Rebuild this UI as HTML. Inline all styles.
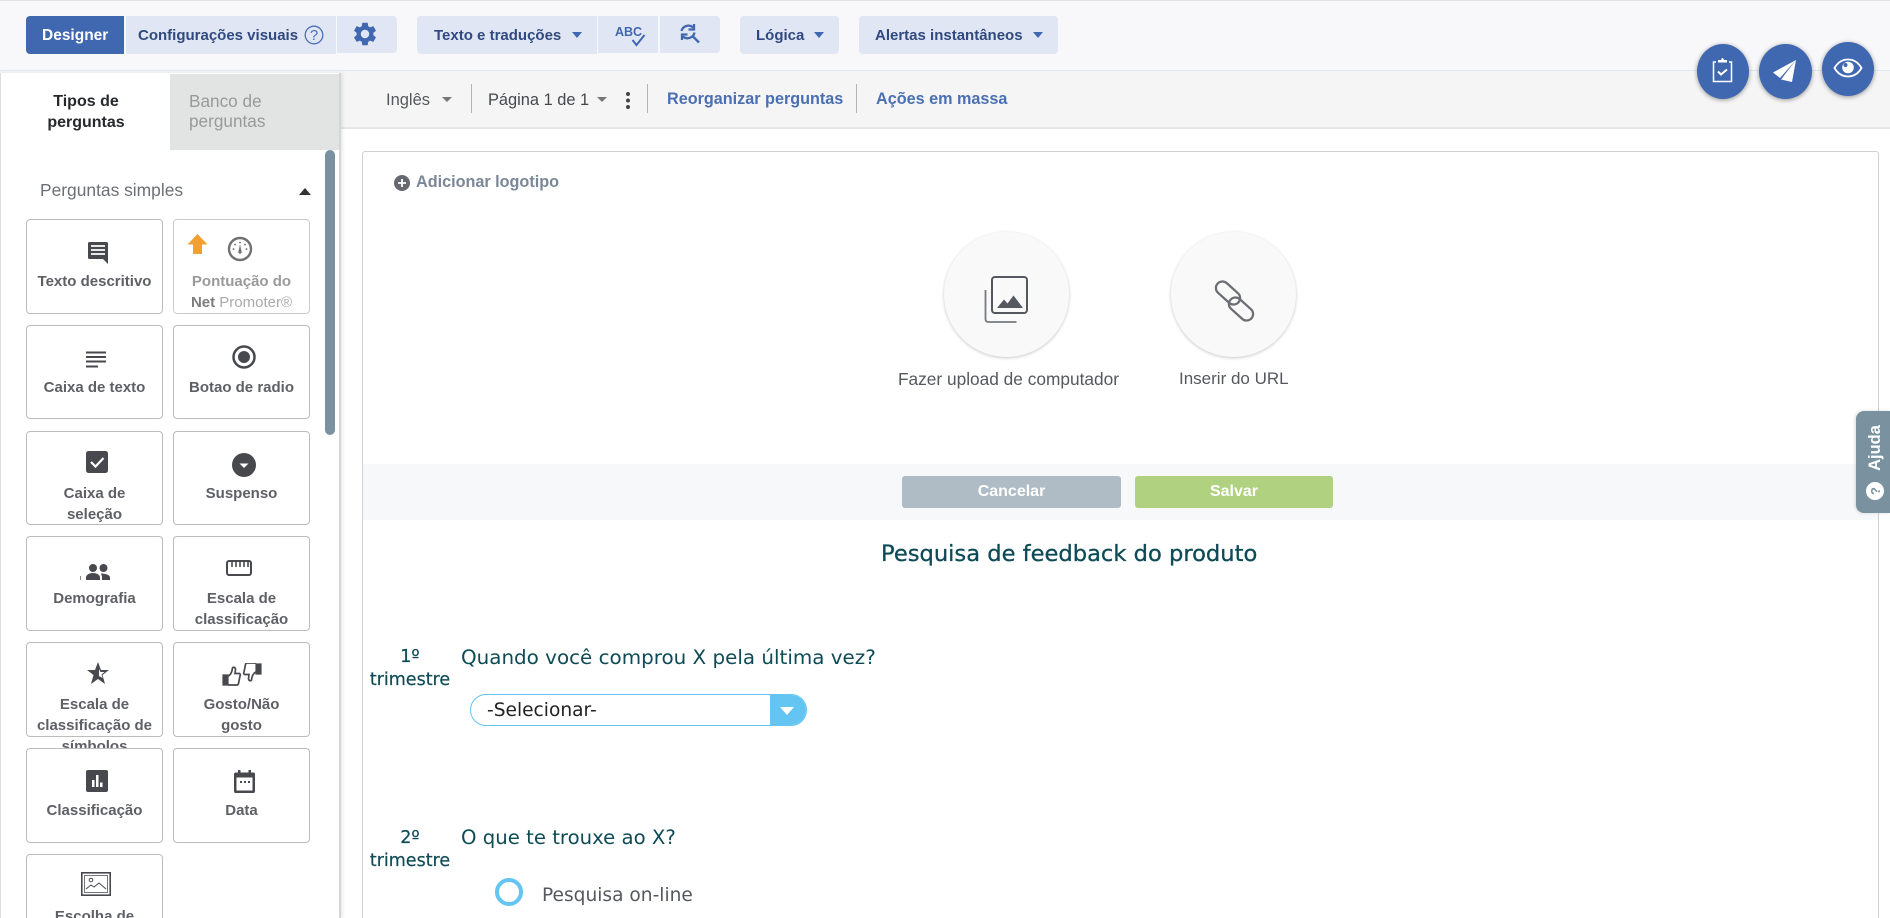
<!DOCTYPE html>
<html lang="pt"><head><meta charset="utf-8"><title>Designer</title>
<style>
html,body{margin:0;padding:0;width:1890px;height:918px;overflow:hidden;background:#fff;font-family:"Liberation Sans",sans-serif}
div,span,svg{position:absolute;box-sizing:border-box}
#r{left:0;top:0;width:1890px;height:918px;overflow:hidden;background:#fff}
.t{white-space:nowrap;line-height:20px}
.b{background:#e1e6f4}
.tb{color:#30497f;font-size:15px;font-weight:bold;top:26px}
.c{width:137px;background:#fff;border:1px solid #bcbcbc;border-radius:4px}
.l{left:-1px;width:137px;text-align:center;color:#5f6066;font-size:15px;font-weight:bold;line-height:21px;top:51px}
.m{font-family:"DejaVu Sans",sans-serif;color:#0f4b56;white-space:nowrap}
.car{width:0;height:0;border-left:5.5px solid transparent;border-right:5.5px solid transparent;border-top:6px solid #4068b0}
.gc{width:0;height:0;border-left:5px solid transparent;border-right:5px solid transparent;border-top:5px solid #777}
.sep{width:1px;background:#b5b5b5;top:84px;height:29px}
.fab{background:#4068b0;border-radius:50%;box-shadow:0 1px 5px rgba(0,0,0,.4)}
</style></head><body><div id="r">
<div style="left:0;top:0;width:1890px;height:1px;background:#e2e2e2"></div>
<div style="left:0;top:1px;width:1890px;height:69px;background:#f8f8fb"></div>
<div style="left:0;top:70px;width:1890px;height:59px;background:#f5f5f5;border-top:1px solid #e1e6f4;border-bottom:2px solid #e6e6e6"></div>

<div style="left:26px;top:16px;width:98px;height:38px;background:#4068b0;border-radius:4px 0 0 4px"></div>
<div class="t" style="left:42px;top:26px;color:#fff;font-size:15.5px;font-weight:bold">Designer</div>
<div class="b" style="left:126px;top:16px;width:210px;height:38px"></div>
<div class="t tb" style="left:138px">Configurações visuais</div>
<svg style="left:304px;top:25px" width="20" height="20" viewBox="0 0 20 20"><circle cx="10" cy="10" r="8.800" fill="none" stroke="#4a70b6" stroke-width="1.300"/><text x="10" y="15" text-anchor="middle" font-family="Liberation Sans" font-size="15" fill="#4a70b6">?</text></svg>
<div class="b" style="left:337px;top:16px;width:60px;height:37px;border-radius:0 4px 4px 0"></div>
<svg style="left:351px;top:20px" width="28" height="28" viewBox="0 0 24 24"><path fill="#4068b0" d="M19.14 12.94c.04-.3.06-.61.06-.94 0-.32-.02-.64-.07-.94l2.03-1.58c.18-.14.23-.41.12-.61l-1.92-3.32c-.12-.22-.37-.29-.59-.22l-2.39.96c-.5-.38-1.03-.7-1.62-.94l-.36-2.54c-.04-.24-.24-.41-.48-.41h-3.84c-.24 0-.43.17-.47.41l-.36 2.54c-.59.24-1.13.57-1.62.94l-2.39-.96c-.22-.08-.47 0-.59.22L2.74 8.87c-.12.21-.08.47.12.61l2.03 1.58c-.05.3-.09.63-.09.94s.02.64.07.94l-2.03 1.58c-.18.14-.23.41-.12.61l1.92 3.32c.12.22.37.29.59.22l2.39-.96c.5.38 1.03.7 1.62.94l.36 2.54c.05.24.24.41.48.41h3.84c.24 0 .44-.17.47-.41l.36-2.54c.59-.24 1.13-.56 1.62-.94l2.39.96c.22.08.47 0 .59-.22l1.92-3.32c.12-.22.07-.47-.12-.61l-2.01-1.58zM12 15.6c-1.98 0-3.6-1.62-3.6-3.6s1.62-3.6 3.6-3.6 3.6 1.62 3.6 3.6-1.62 3.6-3.6 3.6z"/></svg>
<div class="b" style="left:417px;top:16px;width:180px;height:38px;border-radius:4px 0 0 4px"></div>
<div class="t tb" style="left:434px">Texto e traduções</div>
<div class="car" style="left:572px;top:32px"></div>
<div class="b" style="left:598px;top:16px;width:60px;height:37px"></div>
<div class="t" style="left:615px;top:24px;font-size:12.500px;color:#4068b0;font-weight:bold;line-height:16px">ABC</div>
<svg style="left:630px;top:33px" width="16" height="14" viewBox="0 0 16 14"><path d="M2.500 7l4 5 8-10" fill="none" stroke="#4068b0" stroke-width="2"/></svg>
<div class="b" style="left:660px;top:16px;width:60px;height:37px;border-radius:0 4px 4px 0"></div>
<svg style="left:677px;top:23px" width="24" height="22" viewBox="0 0 24 22"><path d="M4.500 8a7 7 0 0 1 11.500-3.500M17 1v5.500h-5.500M17.500 9.500A7 7 0 0 1 6 13.500M5 17v-5.500h5.500M15.500 13l6.500 6.500" fill="none" stroke="#4068b0" stroke-width="2.300"/></svg>
<div class="b" style="left:740px;top:16px;width:99px;height:38px;border-radius:4px"></div>
<div class="t tb" style="left:756px">Lógica</div>
<div class="car" style="left:814px;top:32px"></div>
<div class="b" style="left:859px;top:16px;width:199px;height:38px;border-radius:4px"></div>
<div class="t tb" style="left:875px">Alertas instantâneos</div>
<div class="car" style="left:1033px;top:32px"></div>

<div class="t" style="left:386px;top:90px;font-size:16.500px;color:#55585e">Inglês</div>
<div class="gc" style="left:442px;top:97px"></div>
<div class="sep" style="left:471px"></div>
<div class="t" style="left:488px;top:90px;font-size:16.400px;color:#45484e">Página 1 de 1</div>
<div class="gc" style="left:597px;top:97px"></div>
<div style="left:626px;top:92px;width:4px;height:4px;border-radius:50%;background:#444;box-shadow:0 6.500px 0 #444,0 13px 0 #444"></div>
<div class="sep" style="left:647px"></div>
<div class="t" style="left:667px;top:89px;font-size:16.200px;font-weight:bold;color:#4a6fb3">Reorganizar perguntas</div>
<div class="sep" style="left:856px"></div>
<div class="t" style="left:876px;top:89px;font-size:16.200px;font-weight:bold;color:#4a6fb3">Ações em massa</div>

<div style="left:362px;top:151px;width:1517px;height:780px;border:1px solid #d0d0d0;border-radius:3px;background:#fff"></div>
<svg style="left:394px;top:175px" width="16" height="16" viewBox="0 0 16 16"><circle cx="8" cy="8" r="8" fill="#666a70"/><path d="M8 4v8M4 8h8" stroke="#fff" stroke-width="1.800"/></svg>
<div class="t" style="left:416px;top:172px;font-size:16.200px;font-weight:bold;color:#7b8797">Adicionar logotipo</div>

<div style="left:944px;top:232px;width:125px;height:125px;border-radius:50%;background:#f9f9f9;box-shadow:0 1px 3px rgba(0,0,0,.22)"></div>
<svg style="left:980px;top:272px" width="54" height="54" viewBox="0 0 54 54"><rect x="12" y="5" width="35" height="36" rx="3" fill="none" stroke="#55585e" stroke-width="2"/><path d="M17 36l7-8.500 3.500 4 6-8 9.500 12.500z" fill="#55585e"/><path d="M5.500 18v29c0 2 1 3 3 3h28" fill="none" stroke="#777a80" stroke-width="1.800"/></svg>
<div class="t" style="left:898px;top:369px;font-size:17.300px;color:#55585e">Fazer upload de computador</div>
<div style="left:1171px;top:232px;width:125px;height:125px;border-radius:50%;background:#f9f9f9;box-shadow:0 1px 3px rgba(0,0,0,.22)"></div>
<svg style="left:1214px;top:280px" width="42" height="42" viewBox="0 0 42 42"><g fill="none" stroke="#6c6e73" stroke-width="2.300"><rect x="0" y="6.500" width="28" height="13" rx="6.500" transform="rotate(42 14 13)"/><rect x="13" y="22.500" width="28" height="13" rx="6.500" transform="rotate(42 27 29)"/></g></svg>
<div class="t" style="left:1179px;top:369px;font-size:17px;color:#55585e">Inserir do URL</div>

<div style="left:363px;top:464px;width:1515px;height:56px;background:#f7f8fa"></div>
<div style="left:902px;top:476px;width:219px;height:32px;background:#b0bcc5;border-radius:3px;color:#fff;font-size:16px;font-weight:bold;text-align:center;line-height:32px">Cancelar</div>
<div style="left:1135px;top:476px;width:198px;height:32px;background:#b0d180;border-radius:3px;color:#fff;font-size:16px;font-weight:bold;text-align:center;line-height:32px">Salvar</div>

<div class="m" style="left:881px;top:541px;font-size:22.600px;line-height:26px;-webkit-text-stroke:.3px #0f4b56">Pesquisa de feedback do produto</div>
<div class="m" style="left:365px;top:646px;width:90px;text-align:center;font-size:17.500px;line-height:23px;-webkit-text-stroke:.2px #0f4b56">1º<br>trimestre</div>
<div class="m" style="left:461px;top:646px;font-size:19.900px;line-height:24px">Quando você comprou X pela última vez?</div>
<div style="left:470px;top:694px;width:337px;height:32px;border:1px solid #64c5f3;border-radius:16px;background:#fff;overflow:hidden"><div style="left:299px;top:-1px;width:38px;height:32px;background:#64c5f3"></div><div style="left:309px;top:12px;width:0;height:0;border-left:7px solid transparent;border-right:7px solid transparent;border-top:8px solid #fff"></div></div>
<div class="m" style="left:487px;top:699px;font-size:18.600px;line-height:24px;color:#222">-Selecionar-</div>
<div class="m" style="left:365px;top:827px;width:90px;text-align:center;font-size:17.500px;line-height:23px;-webkit-text-stroke:.2px #0f4b56">2º<br>trimestre</div>
<div class="m" style="left:461px;top:826px;font-size:19.700px;line-height:24px">O que te trouxe ao X?</div>
<div style="left:495px;top:878px;width:28px;height:28px;border:4px solid #64c5f3;border-radius:50%"></div>
<div class="m" style="left:542px;top:884px;font-size:18.600px;line-height:24px;color:#55585e">Pesquisa on-line</div>

<div style="left:1856px;top:411px;width:34px;height:102px;background:#7a919f;border-radius:8px 0 0 8px;box-shadow:-1px 0 3px rgba(0,0,0,.15)"></div>
<div class="t" style="left:1850px;top:438px;width:50px;text-align:center;color:#fff;font-size:16.500px;font-weight:bold;transform:rotate(-90deg)">Ajuda</div>
<svg style="left:1866px;top:482px" width="18" height="18" viewBox="0 0 18 18"><circle cx="9" cy="9" r="9" fill="#fff"/><text x="9" y="14" transform="rotate(-90 9 9)" text-anchor="middle" font-family="Liberation Sans" font-weight="bold" font-size="13" fill="#7a919f">?</text></svg>

<div class="fab" style="left:1697px;top:44px;width:52px;height:55px"></div>
<svg style="left:1710px;top:56px" width="26" height="30" viewBox="0 0 26 30"><path d="M6 6H3.500v19.500h18V6H19" fill="none" stroke="#fff" stroke-width="1.500"/><path d="M8 6.500h9V4h-3l-1-2h-1l-1 2H8z" fill="#fff"/><path d="M8 15.500l3 3 6-5" fill="none" stroke="#fff" stroke-width="2"/></svg>
<div class="fab" style="left:1759px;top:44px;width:53px;height:55px"></div>
<svg style="left:1772px;top:59px" width="26" height="24" viewBox="0 0 26 24"><path d="M24 1L1 13.500 8 19zM24 1L9 20.500 20 23z" fill="#fff"/></svg>
<div class="fab" style="left:1822px;top:42px;width:52px;height:54px"></div>
<svg style="left:1833px;top:57px" width="30" height="22" viewBox="0 0 30 22"><path d="M1.500 11C5 5 10 2.500 15 2.500S25 5 28.500 11C25 17 20 19.500 15 19.500S5 17 1.500 11z" fill="none" stroke="#fff" stroke-width="1.800"/><circle cx="15" cy="10.500" r="5.800" fill="#fff"/><circle cx="12.500" cy="8" r="2" fill="#4068b0"/></svg>

<div style="left:0;top:73px;width:341px;height:845px;background:#fff;border-left:1px solid #dcdcdc;border-right:2px solid #d6d6d6;box-shadow:2px 0 3px rgba(0,0,0,.08)"></div>
<div style="left:170px;top:74px;width:169px;height:76px;background:#e2e4e3"></div>
<div style="left:1px;top:92px;width:170px;text-align:center;font-size:16px;font-weight:bold;line-height:20.500px;color:#26282c">Tipos de<br>perguntas</div>
<div style="left:189px;top:91px;font-size:17.200px;line-height:20px;color:#999;white-space:nowrap">Banco de<br>perguntas</div>
<div style="left:325px;top:150px;width:10px;height:285px;background:#7a919f;border-radius:5px"></div>
<div class="t" style="left:40px;top:180px;font-size:17.400px;color:#6c6f74">Perguntas simples</div>
<div style="left:299px;top:188px;width:0;height:0;border-left:6px solid transparent;border-right:6px solid transparent;border-bottom:7px solid #333"></div>

<div class="c" style="left:26px;top:219px;height:95px"><div class="l">Texto descritivo</div><svg style="left:59px;top:21px" width="24" height="24" viewBox="0 0 24 24"><path d="M2 2.500Q2 1 3.500 1h17Q22 1 22 2.500V23l-5-5H3.500Q2 18 2 16.500z" fill="#48494f"/><path d="M5 5h14M5 9h14M5 13h14" stroke="#fff" stroke-width="1.800"/></svg></div>
<div class="c" style="left:173px;top:219px;height:95px;border-color:#ccc"><div class="l" style="color:#9a9a9a">Pontuação do<br><span style="position:static;color:#7d7d7d">Net</span> <span style="position:static;font-weight:normal;color:#aaa">Promoter®</span></div>
<svg style="left:13px;top:14px" width="21" height="21" viewBox="0 0 21 21"><path d="M10.500 0L20.500 10.500h-5.500V20H6v-9.500H.5z" fill="#f0a030"/></svg>
<svg style="left:53px;top:16px" width="26" height="26" viewBox="0 0 26 26"><circle cx="13" cy="13" r="11" fill="none" stroke="#707070" stroke-width="2.400"/><path d="M6.500 13v.1M8 8.500v.1M13 6.500v.1M18 8.500v.1M19.500 13v.1" stroke="#707070" stroke-width="1.800" stroke-linecap="round"/><path d="M13 8.500l1.700 7.500a1.700 1.700 0 1 1-3.400 0z" fill="#707070"/></svg></div>

<div class="c" style="left:26px;top:325px;height:94px"><div class="l">Caixa de texto</div><svg style="left:59px;top:25px" width="20" height="17" viewBox="0 0 20 17"><path d="M0 1.500h20M0 6h20M0 10.500h20M0 15.500h12" stroke="#48494f" stroke-width="2"/></svg></div>
<div class="c" style="left:173px;top:325px;height:94px"><div class="l">Botao de radio</div><svg style="left:58px;top:19px" width="24" height="24" viewBox="0 0 24 24"><circle cx="12" cy="12" r="10.500" fill="none" stroke="#48494f" stroke-width="2.500"/><circle cx="12" cy="12" r="6" fill="#48494f"/></svg></div>

<div class="c" style="left:26px;top:431px;height:94px"><div class="l">Caixa de<br>seleção</div><svg style="left:59px;top:19px" width="22" height="22" viewBox="0 0 22 22"><rect width="22" height="22" rx="2.500" fill="#48494f"/><path d="M5 11l4.500 4.500L17.500 7" fill="none" stroke="#fff" stroke-width="2.200"/></svg></div>
<div class="c" style="left:173px;top:431px;height:94px"><div class="l">Suspenso</div><svg style="left:58px;top:21px" width="24" height="24" viewBox="0 0 24 24"><circle cx="12" cy="12" r="12" fill="#48494f"/><path d="M7.500 10.500h9L12 15z" fill="#fff"/></svg></div>

<div class="c" style="left:26px;top:536px;height:95px"><div class="l">Demografia</div><svg style="left:53px;top:26px" width="31" height="18" viewBox="0 0 31 18"><rect x="0" y="13" width="1" height="4" fill="#888"/><circle cx="13" cy="5" r="4" fill="#48494f"/><circle cx="23.500" cy="5" r="4" fill="#48494f"/><path d="M6 17v-2.500c0-3 4-4.500 7-4.500s7 1.500 7 4.500V17zM21 10.500c3 0 9 1 9 4V17h-8v-3c0-1.500-1-2.500-1-3.500z" fill="#48494f"/></svg></div>
<div class="c" style="left:173px;top:536px;height:95px"><div class="l">Escala de<br>classificação</div><svg style="left:52px;top:22px" width="26" height="18" viewBox="0 0 26 18"><rect x="1" y="2" width="24" height="14" rx="2" fill="none" stroke="#48494f" stroke-width="2"/><path d="M6 2v6M10 2v6M14 2v6M18 2v6M22 2v6" stroke="#48494f" stroke-width="1.600"/></svg></div>

<div class="c" style="left:26px;top:642px;height:95px"><div class="l">Escala de<br>classificação de<br>símbolos</div><svg style="left:59px;top:18px" width="24" height="24" viewBox="0 0 24 24"><path d="M12 1l3 8h8l-6.500 5 2.500 9L12 18l-7 5 2.500-9L1 9h8z" fill="#48494f"/><path d="M13 8l1.500 3h4l-3 2.500 1 3.500-3.500-2z" fill="#fff"/></svg></div>
<div class="c" style="left:173px;top:642px;height:95px"><div class="l">Gosto/Não<br>gosto</div><svg style="left:48px;top:20px" width="40" height="24" viewBox="0 0 40 24"><path d="M1 12h5v10H1z" fill="#48494f" stroke="#48494f" stroke-width="1.200"/><path d="M6 13c3-1 4-4 4.500-8 1-1.500 3-.5 3 1.500l-.5 4h4.500c1 .5 1 1.500.5 2.500l-1.500 7.500c-.3 1-.8 1.500-1.500 1.500H6" fill="none" stroke="#48494f" stroke-width="1.700"/><path d="M39 1h-5v10h5z" fill="#48494f" stroke="#48494f" stroke-width="1.200"/><path d="M34 9c-3 1-4 4-4.500 8-1 1.500-3 .5-3-1.500l.5-4h-4.500c-1-.5-1-1.500-.5-2.500l1.500-7.500c.3-1 .8-1.500 1.500-1.500H34" fill="none" stroke="#48494f" stroke-width="1.700"/></svg></div>

<div class="c" style="left:26px;top:748px;height:95px"><div class="l">Classificação</div><svg style="left:59px;top:21px" width="22" height="22" viewBox="0 0 22 22"><rect width="22" height="22" rx="2" fill="#48494f"/><path d="M6 10h2.500v7H6zM10 5h2.500v12H10zM14 12.500h2.500V17H14z" fill="#fff"/></svg></div>
<div class="c" style="left:173px;top:748px;height:95px"><div class="l">Data</div><svg style="left:59px;top:20px" width="24" height="24" viewBox="0 0 24 24"><path d="M5 1h2.500v2.500h8V1H18v2.500h2c1.500 0 2 .5 2 2V22c0 1.500-.5 2-2 2H3c-1.500 0-2-.5-2-2V5.500c0-1.500.5-2 2-2h2zM3.500 8.500V21.500h16V8.500z" fill="#48494f"/><path d="M7 12h2v2H7zM11 12h2v2h-2zM15 12h2v2h-2z" fill="#48494f"/></svg></div>

<div class="c" style="left:26px;top:854px;height:95px"><div class="l">Escolha de</div><svg style="left:54px;top:17px" width="30" height="24" viewBox="0 0 30 24"><rect x=".8" y=".8" width="28.400" height="22.400" fill="none" stroke="#48494f" stroke-width="1.600"/><rect x="3.500" y="3.500" width="23" height="17" fill="none" stroke="#777" stroke-width="1"/><circle cx="10" cy="8" r="1.800" fill="none" stroke="#48494f"/><path d="M5 17l5-4 3 2 5-4 7 6" fill="none" stroke="#48494f" stroke-width="1"/></svg></div>
</div></body></html>
